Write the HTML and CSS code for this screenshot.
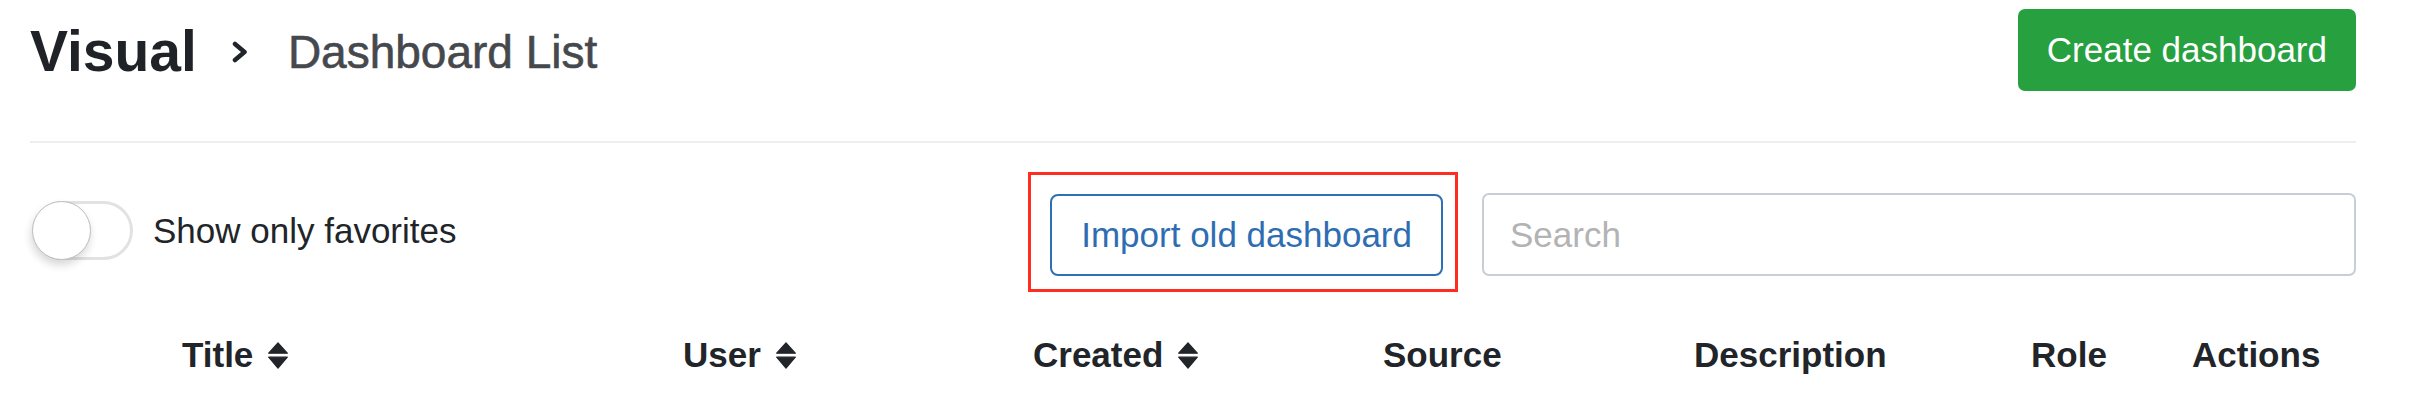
FILE: index.html
```html
<!DOCTYPE html>
<html lang="en">
<head>
<meta charset="utf-8">
<title>Dashboard List</title>
<link rel="stylesheet" href="styles.css">
</head>
<body>
<div class="page">
  <header class="topbar">
    <div class="crumbs">
      <h1 class="crumb-root">Visual</h1>
      <svg class="crumb-sep" viewBox="0 0 16 22" width="16" height="22" aria-hidden="true">
        <polyline points="3,3 12.5,11 3,19" fill="none" stroke="#212529" stroke-width="4.5" stroke-linecap="round" stroke-linejoin="round"/>
      </svg>
      <h2 class="crumb-current">Dashboard List</h2>
    </div>
    <button class="btn btn-create" type="button">Create dashboard</button>
  </header>

  <div class="toolbar">
    <label class="fav-toggle">
      <span class="switch"><span class="knob"></span></span>
      <span class="fav-label">Show only favorites</span>
    </label>
    <div class="import-wrap">
      <button class="btn btn-import" type="button">Import old dashboard</button>
      <span class="highlight"></span>
    </div>
    <input class="search" type="text" placeholder="Search">
  </div>

  <div class="table-head">
    <div class="th"></div>
    <div class="th">Title
      <svg class="sort" viewBox="0 0 20 27" width="20" height="27" aria-hidden="true"><path d="M10 0.8 L19.3 11.2 H0.7 Z M0.7 15.2 H19.3 L10 26.2 Z" fill="#212529" stroke="#212529" stroke-width="1.2" stroke-linejoin="round"/></svg>
    </div>
    <div class="th">User
      <svg class="sort" viewBox="0 0 20 27" width="20" height="27" aria-hidden="true"><path d="M10 0.8 L19.3 11.2 H0.7 Z M0.7 15.2 H19.3 L10 26.2 Z" fill="#212529" stroke="#212529" stroke-width="1.2" stroke-linejoin="round"/></svg>
    </div>
    <div class="th">Created
      <svg class="sort" viewBox="0 0 20 27" width="20" height="27" aria-hidden="true"><path d="M10 0.8 L19.3 11.2 H0.7 Z M0.7 15.2 H19.3 L10 26.2 Z" fill="#212529" stroke="#212529" stroke-width="1.2" stroke-linejoin="round"/></svg>
    </div>
    <div class="th">Source</div>
    <div class="th">Description</div>
    <div class="th">Role</div>
    <div class="th">Actions</div>
  </div>
</div>
</body>
</html>
```

FILE: styles.css
```css
* {
  box-sizing: border-box;
}

body {
  margin: 0;
  background: #ffffff;
  color: #212529;
  font-family: "Liberation Sans", Arial, Helvetica, sans-serif;
}

.page {
  padding: 0 54px 0 30px;
}

/* ---------- top bar ---------- */
.topbar {
  display: flex;
  align-items: center;
  justify-content: space-between;
  padding: 9px 0 50px;
  border-bottom: 2px solid #eceff2;
}

.crumbs {
  display: flex;
  align-items: center;
  margin-top: 3px;
}

.crumb-root {
  margin: 0;
  font-size: 57px;
  font-weight: 700;
  line-height: 1;
  color: #1f2226;
}

.crumb-sep {
  display: block;
  margin: 0 40px 0 35px;
}

.crumb-current {
  margin: 0;
  font-size: 46px;
  font-weight: 400;
  line-height: 1;
  color: #45484d;
  -webkit-text-stroke: 0.6px #45484d;
}

.btn {
  font-family: inherit;
  font-size: 35px;
  cursor: pointer;
}

.btn-create {
  height: 82px;
  padding: 0 29px;
  border: none;
  border-radius: 7px;
  background: #27a03f;
  color: #ffffff;
}

/* ---------- toolbar ---------- */
.toolbar {
  display: flex;
  align-items: center;
  padding-top: 50px;
}

.fav-toggle {
  flex: 1;
  display: flex;
  align-items: center;
  gap: 20px;
  margin-bottom: 8px;
}

.switch {
  position: relative;
  display: block;
  width: 100px;
  height: 59px;
  margin-left: 3px;
  border: 3px solid #e2e2e2;
  border-radius: 30px;
  background: #ffffff;
}

.knob {
  position: absolute;
  top: -3px;
  left: -4px;
  width: 59px;
  height: 59px;
  border-radius: 50%;
  background: #ffffff;
  border: 1px solid #bdbdbd;
  box-shadow: -1px 5px 9px rgba(0, 0, 0, 0.16);
}

.fav-label {
  font-size: 35px;
  color: #212529;
}

.import-wrap {
  position: relative;
  margin-right: 39px;
}

.btn-import {
  display: block;
  height: 82px;
  padding: 0 29px;
  border: 2px solid #2f6fb3;
  border-radius: 8px;
  background: #ffffff;
  color: #2f6db2;
}

.highlight {
  position: absolute;
  top: -22px;
  left: -22px;
  right: -15px;
  bottom: -16px;
  border: 3px solid #ff2d1f;
  pointer-events: none;
}

.search {
  width: 874px;
  height: 83px;
  padding: 0 26px;
  border: 2px solid #c9cdd5;
  border-radius: 7px;
  font-family: inherit;
  font-size: 35px;
  color: #212529;
  outline: none;
}

.search::placeholder {
  color: #b3b3b3;
}

/* ---------- table head ---------- */
.table-head {
  display: grid;
  grid-template-columns: 140px 501px 350px 350px 311px 337px 161px 176px;
  margin-top: 59px;
}

.th {
  display: flex;
  align-items: center;
  gap: 15px;
  padding: 0 12px;
  font-size: 35px;
  font-weight: 700;
  line-height: 40px;
  color: #212529;
}

.sort {
  display: block;
  flex: none;
}
```
